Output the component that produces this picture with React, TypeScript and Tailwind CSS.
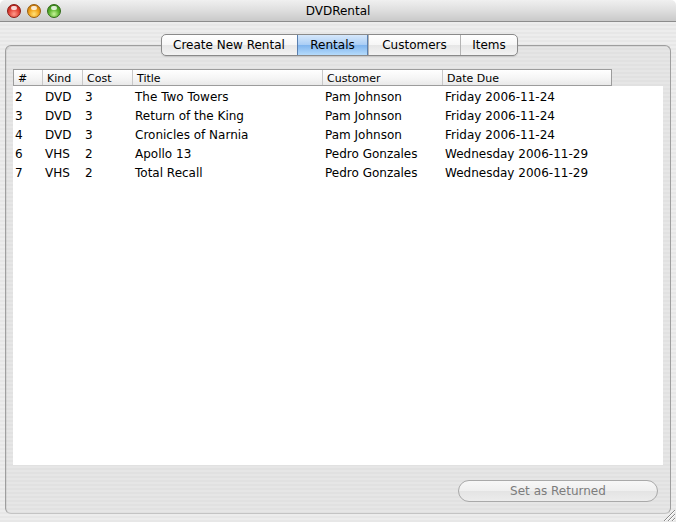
import React from 'react';

interface IRental {
  id: number;
  kind: string;
  cost: number;
  title: string;
  customer: string;
  due: string;
}

const rentals: IRental[] = [
  { id: 2, kind: 'DVD', cost: 3, title: 'The Two Towers', customer: 'Pam Johnson', due: 'Friday 2006-11-24' },
  { id: 3, kind: 'DVD', cost: 3, title: 'Return of the King', customer: 'Pam Johnson', due: 'Friday 2006-11-24' },
  { id: 4, kind: 'DVD', cost: 3, title: 'Cronicles of Narnia', customer: 'Pam Johnson', due: 'Friday 2006-11-24' },
  { id: 6, kind: 'VHS', cost: 2, title: 'Apollo 13', customer: 'Pedro Gonzales', due: 'Wednesday 2006-11-29' },
  { id: 7, kind: 'VHS', cost: 2, title: 'Total Recall', customer: 'Pedro Gonzales', due: 'Wednesday 2006-11-29' },
];

// header column widths (the header box has its own border, so first col is 1px narrower)
const columns = [
  { label: '#', width: 'w-[28px]' },
  { label: 'Kind', width: 'w-[40px]' },
  { label: 'Cost', width: 'w-[50px]' },
  { label: 'Title', width: 'w-[190px]' },
  { label: 'Customer', width: 'w-[120px]' },
  { label: 'Date Due', width: 'w-[169px]' },
];

const tabs = ['Create New Rental', 'Rentals', 'Customers', 'Items'];

const pinstripe =
  'bg-[repeating-linear-gradient(180deg,#ededed_0px,#ededed_2px,#e7e7e7_2px,#e7e7e7_4px)]';

const TrafficLight: React.FC<{ tone: 'red' | 'yellow' | 'green' }> = ({ tone }) => {
  const fill =
    tone === 'red'
      ? 'bg-[radial-gradient(circle_at_50%_75%,#ff9c8c_0%,#e4473c_45%,#a3120c_100%)] border-[#8a1a14]'
      : tone === 'yellow'
        ? 'bg-[radial-gradient(circle_at_50%_75%,#ffe27a_0%,#f2a51c_45%,#b06206_100%)] border-[#9a5e0c]'
        : 'bg-[radial-gradient(circle_at_50%_75%,#c8f59a_0%,#5fb631_45%,#2a7410_100%)] border-[#2f6a16]';
  return (
    <div className={`relative w-[14px] h-[14px] rounded-full border ${fill}`}>
      <div className="absolute left-[3px] top-[1px] w-[6px] h-[4px] rounded-full bg-white/80" />
    </div>
  );
};

const TitleBar: React.FC = () => (
  <div className="relative flex items-center justify-center h-[22px] shrink-0 rounded-t-[5px] border-b border-[#8c8c8c] bg-[linear-gradient(180deg,#f0f0f0_0%,#dedede_50%,#c9c9c9_100%)]">
    <div className="absolute left-[7px] top-[4px] flex gap-[6px]">
      <TrafficLight tone="red" />
      <TrafficLight tone="yellow" />
      <TrafficLight tone="green" />
    </div>
    <span className="text-[12px] text-black leading-none pt-[1px]">DVDRental</span>
  </div>
);

const TabStrip: React.FC<{ active: number }> = ({ active }) => (
  <div className="relative z-10 flex justify-center pl-[3px]">
    <div className="flex h-[22px] rounded-[5px] border border-[#8a8a8a] overflow-hidden bg-[linear-gradient(180deg,#ffffff_0%,#f6f6f6_50%,#e6e6e6_51%,#f3f3f3_100%)] shadow-[0_1px_1px_rgba(0,0,0,0.12)]">
      {tabs.map((t, i) => (
        <div
          key={t}
          className={`flex items-center text-[12px] leading-none text-black ${
            i === 0 ? 'w-[135px] pl-[11px]' : i === 1 ? 'w-[71px] justify-center' : i === 2 ? 'w-[92px] justify-center' : 'w-[57px] justify-center'
          } ${i > 0 ? 'border-l border-[#b4b4b4]' : ''} ${
            i === active
              ? 'border-l-[#5a7fae] border-r border-r-[#5a7fae] bg-[linear-gradient(180deg,#d6e8fb_0%,#a9cdf5_50%,#7fb4ee_51%,#b5dbfb_100%)]'
              : ''
          }`}
        >
          {t}
        </div>
      ))}
    </div>
  </div>
);

const RentalsTable: React.FC = () => (
  <div className="flex flex-col flex-1 min-h-0">
    <div className="flex h-[17px] shrink-0">
      <div className="flex border border-[#9c9c9c] bg-[linear-gradient(180deg,#ffffff_0%,#f4f4f4_60%,#e9e9e9_100%)]">
        {columns.map((c, i) => (
          <div
            key={c.label}
            className={`${c.width} flex items-center pl-[4px] pt-[2px] text-[11px] leading-none text-black ${
              i > 0 ? 'border-l border-[#c8c8c8]' : ''
            }`}
          >
            {c.label}
          </div>
        ))}
      </div>
    </div>
    <div className="flex-1 bg-white pt-[1px]">
      {rentals.map((r) => (
        <div key={r.id} className="flex h-[19px] items-center text-[12px] text-black leading-none">
          <div className="w-[29px] pl-[2px]">{r.id}</div>
          <div className="w-[40px] pl-[3px]">{r.kind}</div>
          <div className="w-[50px] pl-[3px]">{r.cost}</div>
          <div className="w-[190px] pl-[3px]">{r.title}</div>
          <div className="w-[120px] pl-[3px]">{r.customer}</div>
          <div className="w-[170px] pl-[3px] whitespace-nowrap">{r.due}</div>
        </div>
      ))}
    </div>
  </div>
);

const ResizeGrip: React.FC = () => (
  <svg className="absolute right-0 bottom-0" width="15" height="15" viewBox="0 0 15 15">
    <path d="M14 3 L3 14 M14 7 L7 14 M14 11 L11 14" stroke="#8a8a8a" strokeWidth="1" />
    <path d="M14 4 L4 14 M14 8 L8 14 M14 12 L12 14" stroke="#ffffff" strokeWidth="1" />
  </svg>
);

export default function App() {
  return (
    <div className="w-[676px] h-[522px] bg-white font-['DejaVu_Sans',sans-serif]">
      <div className="relative flex flex-col w-full h-full">
        <TitleBar />
        <div className={`flex flex-col flex-1 pt-[12px] px-[5px] pb-[8px] ${pinstripe}`}>
          <TabStrip active={1} />
          <div className="flex flex-col flex-1 -mt-[11px] rounded-[6px] border border-[#9e9e9e] border-b-[#c4c4c4] pt-[23px] px-[7px] bg-[repeating-linear-gradient(180deg,#e6e6e6_0px,#e6e6e6_2px,#e1e1e1_2px,#e1e1e1_4px)] shadow-[inset_1px_1px_0_rgba(0,0,0,0.06)]">
            <RentalsTable />
            <div className="flex justify-end pr-[5px] mt-[15px] mb-[11px]">
              <button
                disabled
                className="w-[200px] h-[22px] rounded-full border border-[#a9a9a9] text-[12px] leading-none text-[#7c7c7c] bg-[linear-gradient(180deg,#f7f7f7_0%,#efefef_50%,#e4e4e4_51%,#ececec_100%)]"
              >
                Set as Returned
              </button>
            </div>
          </div>
        </div>
        <ResizeGrip />
      </div>
    </div>
  );
}
